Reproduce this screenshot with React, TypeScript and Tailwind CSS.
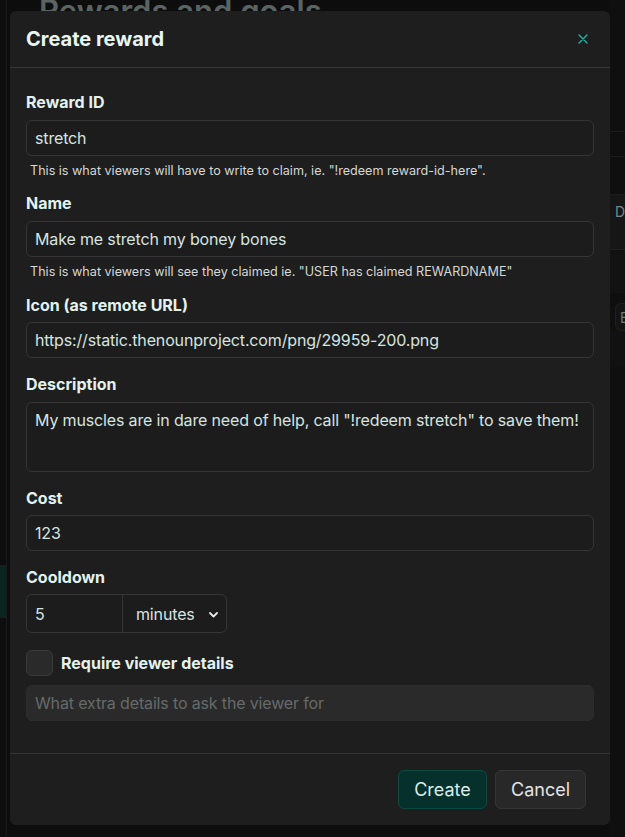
import React from "react";

const inputCls =
  "block w-full h-9 rounded-md border border-[#353535] bg-[#1c1c1c] px-2 text-[16px] tracking-[-0.15px] text-[#d6e4e0] outline-none font-['Inter',sans-serif]";
const labelCls = "block text-[16px] leading-6 font-bold text-[#e2f2ee]";
const helpCls = "pl-1 text-[12.6px] leading-4 text-[#d4d8d7]";

export default function App() {
  return (
    <div className="relative w-[625px] h-[837px] overflow-hidden bg-[#0d0d0d] font-['Inter',sans-serif]">
      {/* background page (dimmed) */}
      <div className="flex h-full">
        <div className="w-[7px] shrink-0 border-r border-[#1a1a1a] flex flex-col">
          <div className="h-[565px]" />
          <div className="h-[53px] bg-[#0a2420]" />
        </div>
        <div className="flex-1 pl-[32px]">
          <div className="mt-[-8px] text-[31px] font-semibold leading-[38px] text-[#5a6463] whitespace-nowrap">
            Rewards and goals
          </div>
        </div>
        <div className="w-[15px] shrink-0 bg-[#0f0f0f] flex flex-col">
          <div className="h-[132px] border-b border-[#1b1b1b]" />
          <div className="h-[25px] border-b border-[#1b1b1b]" />
          <div className="h-[38px] border-b border-[#1b1b1b]" />
          <div className="h-[55px] bg-[#161616] border-b border-[#1f1f1f] pl-[5px] pt-[6px] text-[14px] text-[#7a8685]">
            D
          </div>
          <div className="h-[43px] bg-[#121212]" />
          <div className="mt-[10px] ml-[5px] h-[28px] rounded-l-md border border-r-0 border-[#1f1f1f] bg-[#141414] pl-[4px] pt-[3px] text-[14px] text-[#6f7a79]">
            E
          </div>
          <div className="h-[36px] bg-[#111111]" />
        </div>
      </div>

      {/* modal */}
      <div className="absolute left-[10px] top-[11px] w-[600px] h-[814px] rounded-md bg-[#1e1e1e] flex flex-col">
        <div className="h-[57px] shrink-0 flex items-center justify-between pl-4 pr-[22px] border-b border-[#0d4c44]">
          <h2 className="text-[20px] font-bold text-[#e8f6f3] leading-7">Create reward</h2>
          <svg width="10" height="10" viewBox="0 0 10 10" className="mt-[-1px]">
            <path d="M1 1 L9 9 M9 1 L1 9" stroke="#1fb5a5" strokeWidth="1.4" strokeLinecap="round" />
          </svg>
        </div>

        <div className="flex-1 px-4 pt-[22px]">
          <label className={labelCls}>Reward ID</label>
          <input className={inputCls + " mt-1.5"} defaultValue="stretch" />
          <p className={helpCls + " mt-[7px]"}>
            This is what viewers will have to write to claim, ie. "!redeem reward-id-here".
          </p>

          <label className={labelCls + " mt-3"}>Name</label>
          <input className={inputCls + " mt-1.5"} defaultValue="Make me stretch my boney bones" />
          <p className={helpCls + " mt-[7px]"}>
            This is what viewers will see they claimed ie. "USER has claimed REWARDNAME"
          </p>

          <label className={labelCls + " mt-[13px]"}>Icon (as remote URL)</label>
          <input
            className={inputCls + " mt-[5px]"}
            defaultValue="https://static.thenounproject.com/png/29959-200.png"
          />

          <label className={labelCls + " mt-[14px]"}>Description</label>
          <textarea
            className="mt-1.5 block w-full h-[70px] resize-none rounded-md border border-[#353535] bg-[#1c1c1c] px-2 py-[5px] text-[16px] tracking-[-0.15px] leading-6 text-[#d6e4e0] outline-none font-['Inter',sans-serif]"
            defaultValue={'My muscles are in dare need of help, call "!redeem stretch" to save them!'}
          />

          <label className={labelCls + " mt-[14px]"}>Cost</label>
          <input className={inputCls + " mt-[5px]"} defaultValue="123" />

          <label className={labelCls + " mt-[14px]"}>Cooldown</label>
          <div className="mt-[5px] flex w-[201px] h-[39px] rounded-md border border-[#353535] bg-[#1c1c1c]">
            <input
              className="w-[96px] h-full bg-transparent px-2 text-[16px] text-[#d6e4e0] outline-none border-r border-[#353535] font-['Inter',sans-serif]"
              defaultValue="5"
            />
            <div className="relative flex-1 flex items-center pl-[13px]">
              <span className="text-[16px] tracking-[-0.15px] text-[#d6e4e0]">minutes</span>
              <svg width="9" height="6" viewBox="0 0 9 6" className="absolute right-[8px] top-[17px]">
                <path d="M1 1 L4.5 4.5 L8 1" stroke="#e8e8e8" strokeWidth="1.8" fill="none" strokeLinecap="round" strokeLinejoin="round" />
              </svg>
            </div>
          </div>

          <div className="mt-[17px] flex items-center gap-2">
            <div className="w-[27px] h-[26px] rounded-md border border-[#3a3a3a] bg-[#2a2a2a]" />
            <span className="text-[16px] font-bold text-[#e2f2ee] leading-6">Require viewer details</span>
          </div>

          <input
            className="mt-[9px] block w-full h-9 rounded-md border border-[#2c2c2c] bg-[#2a2a2a] px-2 text-[16px] tracking-[-0.15px] text-[#d6e4e0] outline-none placeholder:text-[#666b6a] font-['Inter',sans-serif]"
            placeholder="What extra details to ask the viewer for"
            disabled
          />
        </div>

        <div className="shrink-0 border-t border-[#333333] px-6 pt-4 pb-4 flex justify-end gap-2">
          <button className="w-[89px] h-[39px] rounded-md border border-[#0c4a40] bg-[#06302b] text-[18px] text-[#d9eee9]">
            Create
          </button>
          <button className="w-[91px] h-[39px] rounded-md border border-[#363636] bg-[#282828] text-[18px] text-[#e4e4e4]">
            Cancel
          </button>
        </div>
      </div>
    </div>
  );
}
